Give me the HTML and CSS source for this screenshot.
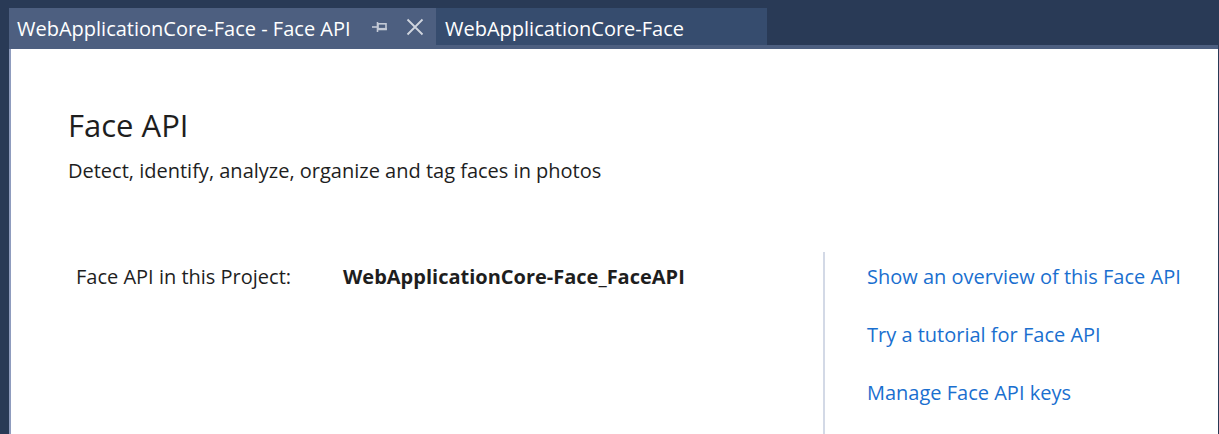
FILE: index.html
```html
<!DOCTYPE html>
<html>
<head>
<meta charset="utf-8">
<link rel="stylesheet" href="styles.css">
</head>
<body>
<div class="window">
  <div class="tabs">
    <div class="tab active">
      <span class="tab-title">WebApplicationCore-Face - Face API</span>
      <svg class="pin" width="16" height="12" viewBox="0 0 16 12">
        <line x1="0" y1="6" x2="5" y2="6" stroke="#c4cad6" stroke-width="1.6"/>
        <line x1="5.5" y1="1" x2="5.5" y2="11" stroke="#c4cad6" stroke-width="1.6"/>
        <rect x="6" y="2.8" width="8" height="5.6" fill="none" stroke="#c4cad6" stroke-width="1.6"/>
        <line x1="6" y1="8" x2="14.8" y2="8" stroke="#c4cad6" stroke-width="2.2"/>
      </svg>
      <svg class="close" width="18" height="18" viewBox="0 0 18 18">
        <path d="M1.5 1.5 L16.5 16.5 M16.5 1.5 L1.5 16.5" stroke="#d0d5de" stroke-width="1.8"/>
      </svg>
    </div>
    <div class="tab inactive">
      <span class="tab-title">WebApplicationCore-Face</span>
    </div>
  </div>
  <div class="strip"></div>
  <div class="content">
    <h1 class="title">Face API</h1>
    <p class="subtitle">Detect, identify, analyze, organize and tag faces in photos</p>
    <div class="body">
      <div class="info">
        <span class="label">Face API in this Project:</span>
        <span class="value">WebApplicationCore-Face_FaceAPI</span>
      </div>
      <div class="links">
        <a class="link">Show an overview of this Face API</a>
        <a class="link">Try a tutorial for Face API</a>
        <a class="link">Manage Face API keys</a>
      </div>
    </div>
  </div>
</div>
</body>
</html>
```

FILE: styles.css
```css
html, body {
  margin: 0;
  padding: 0;
  height: 100%;
  overflow: hidden;
}
body {
  background: #293a56;
  font-family: "Open Sans", "Noto Sans", sans-serif;
}
.window {
  display: flex;
  flex-direction: column;
  height: 434px;
  padding-left: 9px;
  padding-right: 1px;
  box-sizing: border-box;
}
.tabs {
  display: flex;
  flex-shrink: 0;
  margin-top: 8px;
  height: 37px;
}
.tab {
  display: flex;
  align-items: center;
  box-sizing: border-box;
  color: #ffffff;
  font-size: 20px;
  line-height: 33px;
  padding-top: 4px;
  height: 37px;
}
.tab.active {
  background: #4d5f80;
  width: 427px;
  padding-left: 8px;
}
.tab.inactive {
  background: #364c6e;
  width: 331px;
  padding-left: 9px;
}
.tab-title {
  white-space: nowrap;
}
.pin {
  margin-left: 21px;
  margin-top: -4px;
}
.close {
  margin-left: 18px;
  margin-top: -4px;
}
.strip {
  flex-shrink: 0;
  height: 4px;
  background: #4d5f80;
}
.content {
  flex: 1;
  min-height: 0;
  overflow: hidden;
  background: #ffffff;
  border-left: 2px solid #8f9cbe;
  padding-left: 57px;
  color: #1e1e1e;
}
.title {
  margin: 56px 0 0 0;
  font-size: 31px;
  font-weight: 400;
  line-height: 40px;
}
.subtitle {
  margin: 13px 0 0 0;
  font-size: 20px;
  line-height: 26px;
}
.body {
  display: flex;
  margin-top: 68px;
}
.info {
  display: flex;
  box-sizing: border-box;
  width: 755px;
  padding-left: 8px;
  padding-top: 12px;
  font-size: 20px;
  line-height: 26px;
}
.label {
  width: 267px;
  flex-shrink: 0;
}
.value {
  font-weight: 700;
}
.links {
  border-left: 2px solid #d3d9e6;
  padding-left: 42px;
  padding-top: 12px;
  display: flex;
  flex-direction: column;
  gap: 32px;
  height: 200px;
}
.link {
  color: #1a6fcf;
  font-size: 20px;
  line-height: 26px;
  white-space: nowrap;
}
```
